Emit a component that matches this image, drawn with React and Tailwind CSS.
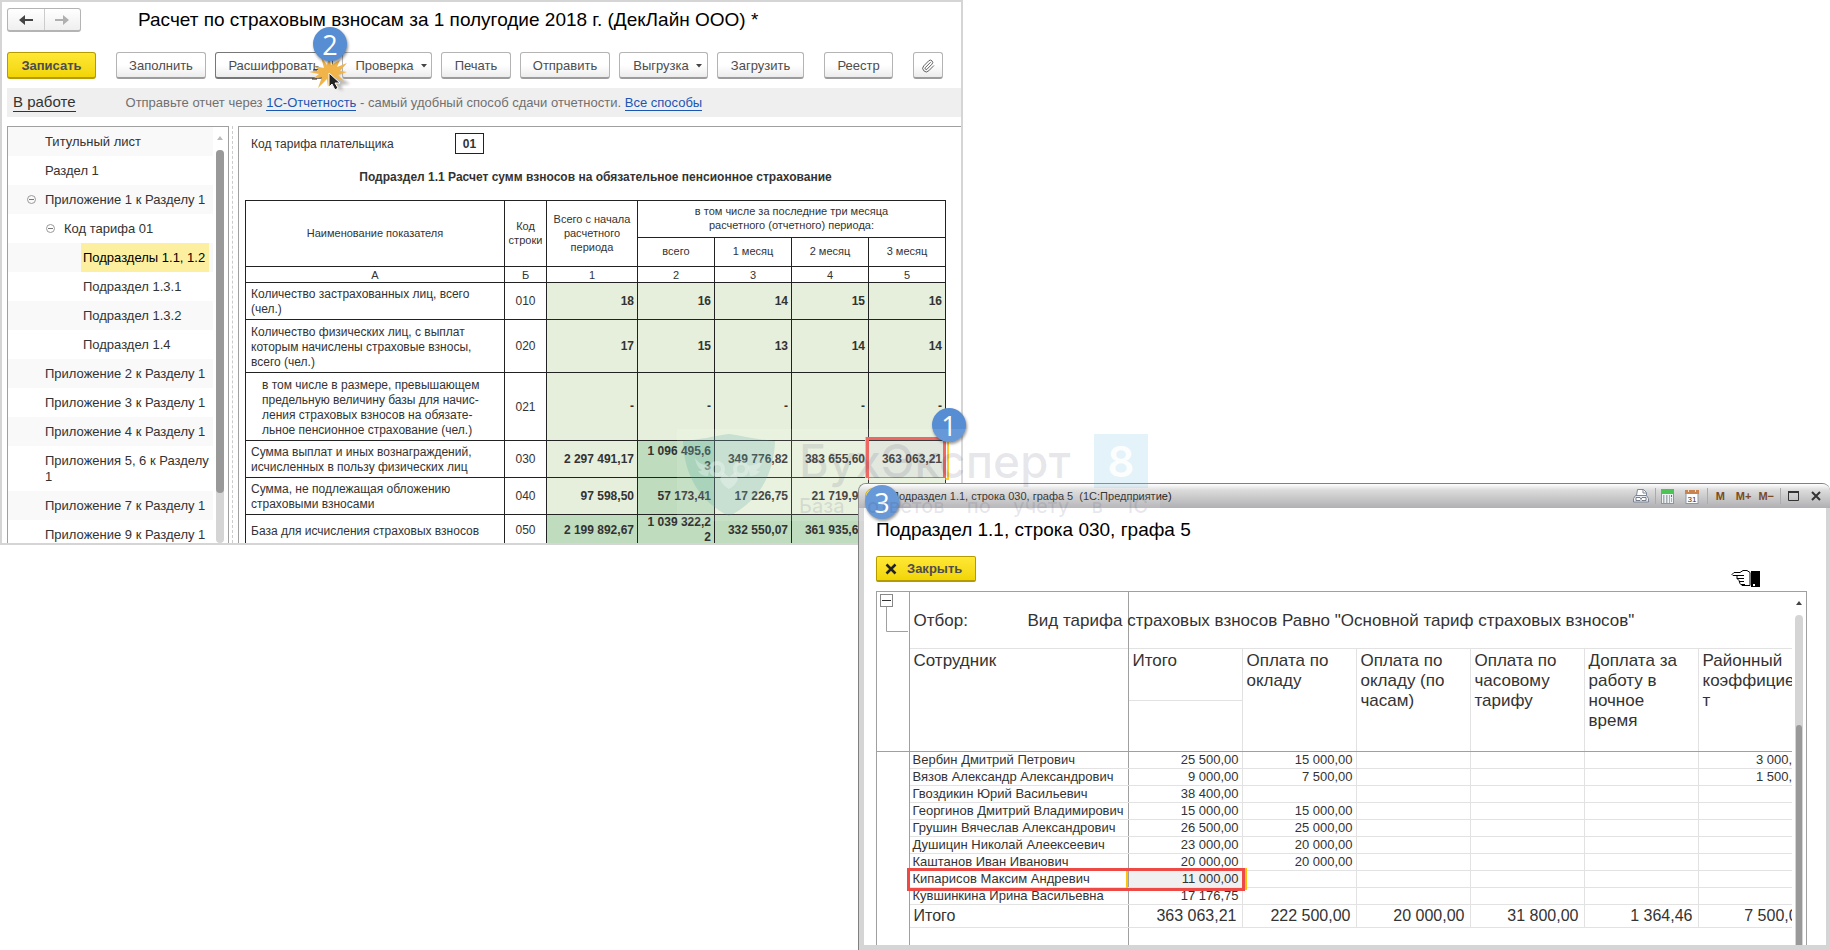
import React from 'react';
import { Paperclip } from 'lucide-react';

const treeItems = [
  { label: 'Титульный лист', level: 0 },
  { label: 'Раздел 1', level: 0 },
  { label: 'Приложение 1 к Разделу 1', level: 0, open: true },
  { label: 'Код тарифа 01', level: 1, open: true },
  { label: 'Подразделы 1.1, 1.2', level: 2, active: true },
  { label: 'Подраздел 1.3.1', level: 2 },
  { label: 'Подраздел 1.3.2', level: 2 },
  { label: 'Подраздел 1.4', level: 2 },
  { label: 'Приложение 2 к Разделу 1', level: 0 },
  { label: 'Приложение 3 к Разделу 1', level: 0 },
  { label: 'Приложение 4 к Разделу 1', level: 0 },
  { label: 'Приложения 5, 6 к Разделу 1', level: 0, tall: true },
  { label: 'Приложение 7 к Разделу 1', level: 0 },
  { label: 'Приложение 9 к Разделу 1', level: 0 },
];

const levelPadding = ['pl-[37px]', 'pl-[56px]', 'pl-[75px]'];

const reportRows = [
  { name: 'Количество застрахованных лиц, всего (чел.)', code: '010', height: 'h-[37px]', values: ['18', '16', '14', '15', '16'] },
  { name: 'Количество физических лиц, с выплат которым начислены страховые взносы, всего (чел.)', code: '020', height: 'h-[53px]', values: ['17', '15', '13', '14', '14'] },
  {
    name: 'в том числе в размере, превышающем\nпредельную величину базы для начис-\nления страховых взносов на обязате-\nльное пенсионное страхование (чел.)',
    code: '021', height: 'h-[68px]', indent: true, values: ['-', '-', '-', '-', '-'],
  },
  {
    name: 'Сумма выплат и иных вознаграждений, исчисленных в пользу физических лиц',
    code: '030', height: 'h-[37px]', dark: [1], selected: 4,
    values: ['2 297 491,17', '1 096 495,6\n3', '349 776,82', '383 655,60', '363 063,21'],
  },
  {
    name: 'Сумма, не подлежащая обложению страховыми взносами',
    code: '040', height: 'h-[37px]', dark: [1],
    values: ['97 598,50', '57 173,41', '17 226,75', '21 719,98', ''],
  },
  {
    name: 'База для исчисления страховых взносов',
    code: '050', height: 'h-[30px]', dark: [0, 1, 2, 3, 4],
    values: ['2 199 892,67', '1 039 322,2\n2', '332 550,07', '361 935,62', ''],
  },
];

const employees = [
  ['Вербин Дмитрий Петрович', '25 500,00', '15 000,00', '3 000,00'],
  ['Вязов Александр Александрович', '9 000,00', '7 500,00', '1 500,00'],
  ['Гвоздикин Юрий Васильевич', '38 400,00', '', ''],
  ['Георгинов Дмитрий Владимирович', '15 000,00', '15 000,00', ''],
  ['Грушин Вячеслав Александрович', '26 500,00', '25 000,00', ''],
  ['Душицин Николай Алеексеевич', '23 000,00', '20 000,00', ''],
  ['Каштанов Иван Иванович', '20 000,00', '20 000,00', ''],
  ['Кипарисов Максим Андревич', '11 000,00', '', ''],
  ['Кувшинкина Ирина Васильевна', '17 176,75', '', ''],
];

const payColumns = [
  'Оплата по\nокладу',
  'Оплата по\nокладу (по\nчасам)',
  'Оплата по\nчасовому\nтарифу',
  'Доплата за\nработу в\nночное\nвремя',
  'Районный\nкоэффициен\nт',
];

const totals = ['363 063,21', '222 500,00', '20 000,00', '31 800,00', '1 364,46', '7 500,00'];

function ToolButton({ children, className, dropdown, strong }) {
  return (
    <button
      className={`flex h-[27px] shrink-0 items-center justify-center rounded-[3px] border border-b-2 bg-linear-to-b from-white from-50% to-[#ececec] pt-px text-[13px] text-[#4d4d4d] ${dropdown ? 'pl-2' : ''} ${strong ? 'border-[#777]' : 'border-[#b4b4b4] border-b-[#9c9c9c]'} ${className}`}
    >
      {children}
      {dropdown && (
        <svg width="6" height="4" viewBox="0 0 6 4" className="ml-[7px]">
          <path d="M0 0h6L3 3.5z" fill="#444" />
        </svg>
      )}
    </button>
  );
}

function Callout({ number, className }) {
  return (
    <div
      className={`absolute z-30 flex h-[34px] w-[34px] items-center justify-center rounded-full bg-[#568dd3] font-['Open_Sans',sans-serif] text-[27px] leading-none text-white shadow-[1px_2px_3px_rgba(0,0,0,0.45)] ${className}`}
    >
      {number}
    </div>
  );
}

function ClickMark() {
  return (
    <svg width="46" height="38" viewBox="0 0 46 38" className="absolute left-[308px] top-[57px] z-20">
      <defs>
        <filter id="soft" x="-30%" y="-30%" width="160%" height="160%">
          <feGaussianBlur stdDeviation="1.5" />
        </filter>
      </defs>
      <path d="M24 8l12 8-6 3 12 8-9 1 2 6-14-8z" fill="#777" opacity="0.5" filter="url(#soft)" />
      <path
        d="M13 0l6 8 2-8 2 8 9-5-3 7 10-4-7 8 7 1-9 3 6 6-8-3 1 12-5-10-4 7-1-8-9 9 4-11-9 2 6-5-10-2 10-2-5-4 10 2z"
        fill="#f0b44a"
      />
      <path d="M21 16v14l3-3 3 6 3-2-3-5h5z" fill="#222" stroke="#fff" strokeWidth="1" />
      <path d="M5 13h4M4 22h5" stroke="#222" />
    </svg>
  );
}

function TreePanel() {
  return (
    <div className="flex w-[222px] shrink-0 overflow-hidden border border-b-0 border-[#a0a0a0] bg-white">
      <ul className="min-w-0 flex-1">
        {treeItems.map((item, i) => (
          <li
            key={item.label}
            className={`relative flex items-center text-[13px] text-[#333] ${item.tall ? 'h-[45px] leading-4' : 'h-[29px]'} ${i % 2 === 0 ? 'bg-[#f9f9f9]' : ''} ${levelPadding[item.level]}`}
          >
            {item.open && (
              <svg width="9" height="9" viewBox="0 0 9 9" className={`absolute top-[10px] ${item.level ? 'left-[38px]' : 'left-[19px]'}`}>
                <circle cx="4.5" cy="4.5" r="4" fill="none" stroke="#999" />
                <path d="M2 4.5h5" stroke="#777" />
              </svg>
            )}
            {item.active ? (
              <span className="-ml-[2px] flex h-full items-center bg-[#fcf0a0] pl-[2px] pr-1 text-black">{item.label}</span>
            ) : (
              <span>{item.label}</span>
            )}
          </li>
        ))}
      </ul>
      <div className="flex w-[15px] flex-col items-start bg-white pl-[3px]">
        <svg width="6" height="4" viewBox="0 0 6 4" className="ml-px mt-[9px]">
          <path d="M0 4h6L3 0z" fill="#bbb" />
        </svg>
        <div className="mt-[10px] w-2 flex-1 rounded-full bg-[#d5d5d5]">
          <div className="h-[343px] rounded-full bg-[#999]" />
        </div>
      </div>
    </div>
  );
}

function ReportTable() {
  const head = 'border border-[#222] pb-[2px] text-center text-[11px] leading-[14px] font-normal';
  return (
    <table className="w-[701px] table-fixed border-collapse text-[12px] text-[#333]">
      <colgroup>
        <col />
        <col className="w-[42px]" />
        <col className="w-[91px]" />
        <col className="w-[77px]" />
        <col className="w-[77px]" />
        <col className="w-[77px]" />
        <col className="w-[77px]" />
      </colgroup>
      <thead>
        <tr className="h-[37px]">
          <th rowSpan={2} className={head}>Наименование показателя</th>
          <th rowSpan={2} className={head}>Код строки</th>
          <th rowSpan={2} className={head}>Всего с начала расчетного периода</th>
          <th colSpan={4} className={head}>
            в том числе за последние три месяца<br />расчетного (отчетного) периода:
          </th>
        </tr>
        <tr className="h-[29px]">
          {['всего', '1 месяц', '2 месяц', '3 месяц'].map((t) => (
            <th key={t} className={head}>{t}</th>
          ))}
        </tr>
        <tr className="h-4">
          {['А', 'Б', '1', '2', '3', '4', '5'].map((t) => (
            <th key={t} className="border border-[#222] text-center text-[11px] leading-[14px] font-normal">{t}</th>
          ))}
        </tr>
      </thead>
      <tbody>
        {reportRows.map((row) => (
          <tr key={row.code} className={row.height}>
            <td className={`whitespace-pre-line border border-[#222] pr-1 pt-[2px] leading-[15px] ${row.indent ? 'pl-4' : 'pl-[5px]'}`}>{row.name}</td>
            <td className="border border-[#222] text-center">{row.code}</td>
            {row.values.map((value, i) => (
              <td
                key={i}
                className={`relative whitespace-pre border border-[#222] pr-[3px] text-right font-bold leading-[15px] ${row.dark?.includes(i) ? 'bg-[#bfdcbf]' : row.selected === i ? 'bg-[#e0e5da]' : 'bg-[#e6efdb]'}`}
              >
                {value}
                {row.selected === i && (
                  <>
                    <span className="absolute -bottom-[3px] -left-[4px] -right-[4px] -top-[4px] border-2 border-[#fdc40f]" />
                    <span className="absolute -bottom-[3px] -left-[3px] -right-[1px] -top-[4px] border-[3px] border-[#ec5650]" />
                  </>
                )}
              </td>
            ))}
          </tr>
        ))}
      </tbody>
    </table>
  );
}

function ReportWindow() {
  return (
    <section className="flex h-[545px] w-[963px] flex-col overflow-hidden border-2 border-[#d5d5d5] bg-white pl-[5px]">
      <header className="flex shrink-0 items-center pt-1">
        <div className="flex h-6 w-[74px] rounded-[3px] border border-b-2 border-[#b4b4b4] bg-linear-to-b from-white to-[#efefef]">
          <button aria-label="Назад" className="flex flex-1 items-center justify-center border-r border-[#ccc]">
            <svg width="14" height="10" viewBox="0 0 14 10"><path d="M14 4H6V0L0 5l6 5V6h8z" fill="#444" /></svg>
          </button>
          <button aria-label="Вперед" className="flex flex-1 items-center justify-center">
            <svg width="14" height="10" viewBox="0 0 14 10"><path d="M0 4h8V0l6 5-6 5V6H0z" fill="#b0b0b0" /></svg>
          </button>
        </div>
        <h1 className="ml-[57px] text-[19px] leading-7 text-black">
          Расчет по страховым взносам за 1 полугодие 2018 г. (ДекЛайн ООО) *
        </h1>
      </header>

      <div className="mt-[18px] flex shrink-0 gap-[9px]">
        <button className="mr-[11px] h-[27px] w-[89px] rounded-[3px] border border-b-2 border-[#b39b00] bg-linear-to-b from-[#ffe833] to-[#f2d500] pt-px text-[13px] font-bold text-[#4d4d4d]">
          Записать
        </button>
        <ToolButton className="w-[90px]">Заполнить</ToolButton>
        <ToolButton className="w-[118px]" strong>Расшифровать</ToolButton>
        <ToolButton className="w-[90px]" dropdown>Проверка</ToolButton>
        <ToolButton className="w-[70px]">Печать</ToolButton>
        <ToolButton className="w-[90px]">Отправить</ToolButton>
        <ToolButton className="w-[89px]" dropdown>Выгрузка</ToolButton>
        <ToolButton className="w-[87px]">Загрузить</ToolButton>
        <ToolButton className="ml-[11px] w-[69px]">Реестр</ToolButton>
        <ToolButton className="ml-[11px] w-[30px]">
          <Paperclip size={14} strokeWidth={1.5} aria-label="Файлы" />
        </ToolButton>
      </div>

      <div className="mt-[9px] flex h-[29px] shrink-0 items-center bg-[#efefef] pl-[6px]">
        <a href="#status" className="text-[15px] leading-[18px] text-[#333] border-b border-[#333]">В работе</a>
        <p className="ml-[50px] text-[13px] leading-4 text-[#707070]">
          Отправьте отчет через{' '}
          <a href="#reporting" className="border-b border-[#1a56b4] text-[#1a56b4]">1С-Отчетность</a>
          {' '}- самый удобный способ сдачи отчетности.{' '}
          <a href="#ways" className="border-b border-[#1a56b4] text-[#1a56b4]">Все способы</a>
        </p>
      </div>

      <div className="mt-[9px] flex min-h-0 flex-1">
        <TreePanel />
        <div className="ml-[3px] w-[6px] shrink-0 border-l border-dashed border-[#ccc]" />
        <div className="min-w-0 flex-1 overflow-hidden border-l border-t border-[#a0a0a0] pl-[6px]">
          <div className="mt-[6px] flex items-center pl-[6px] text-[12px] text-[#333]">
            <span className="w-[204px]">Код тарифа плательщика</span>
            <span className="flex h-[21px] w-[29px] items-center justify-center border border-[#222] font-bold">01</span>
          </div>
          <h2 className="mb-[15px] mt-[15px] w-[701px] text-center text-[12px] font-bold leading-4 text-[#333]">
            Подраздел 1.1 Расчет сумм взносов на обязательное пенсионное страхование
          </h2>
          <ReportTable />
        </div>
      </div>
    </section>
  );
}

function TitleBarIcons() {
  return (
    <div className="flex h-full items-center pr-[9px]">
      <button aria-label="Печать">
        <svg width="16" height="14" viewBox="0 0 16 14">
          <path d="M3.5 6.500L4.500 .5h6l3 3v3.500" fill="#fff" stroke="#7b8796" />
          <path d="M10 .5V4h3.500" fill="none" stroke="#7b8796" />
          <path d="M2.500 6.500h11l2 3v3.500H.5V9.500z" fill="#e8ecf2" stroke="#7b8796" />
          <path d="M3 8.500h4l1 1.500 1-1.500h4v3H9l-1-1-1 1H3z" fill="#fff" stroke="#56616f" strokeWidth=".8" />
        </svg>
      </button>
      <span className="ml-[6px] mr-[5px] h-4 w-px bg-[#aaaaaf]" />
      <button aria-label="Калькулятор">
        <svg width="13" height="15" viewBox="0 0 13 15">
          <rect x=".5" y=".5" width="12" height="14" fill="#eef2f5" stroke="#8a97a3" />
          <rect x="0" y="0" width="13" height="5" fill="#4cc354" />
          <path d="M2 7h1.500M5 7h1.500M8 7h1M2 9h1.500M5 9h1.500M8 9h1M2 11h1.500M5 11h1.500M8 11h1M2 13h1.500M5 13h1.500M8 13h1M10 10h1M10 12h1" stroke="#5d6772" />
          <path d="M10 6h1v2h-1z" fill="#e33" />
        </svg>
      </button>
      <button aria-label="Календарь" className="ml-[11px]">
        <svg width="14" height="15" viewBox="0 0 14 15">
          <rect x="1" y="3" width="12" height="11.500" fill="#fff" stroke="#8a97a3" />
          <rect x="0" y="1" width="14" height="4" fill="#c9834f" />
          <path d="M3.500 0v3M10.500 0v3" stroke="#f3dcc8" />
          <text x="7" y="12.500" textAnchor="middle" fontSize="8" fontFamily="Liberation Sans" fill="#333">31</text>
        </svg>
      </button>
      <span className="ml-2 mr-[8px] h-4 w-px bg-[#aaaaaf]" />
      <button className="text-[11px] font-bold text-[#7a4a24]">M</button>
      <button className="ml-[11px] text-[11px] font-bold text-[#7a4a24]">M+</button>
      <button className="ml-[7px] text-[11px] font-bold text-[#7a4a24]">M−</button>
      <span className="ml-[6px] mr-[7px] h-4 w-px bg-[#aaaaaf]" />
      <button aria-label="Развернуть">
        <svg width="11" height="10" viewBox="0 0 11 10">
          <path d="M.5 .5h10v9H.5z" fill="none" stroke="#333" />
          <path d="M0 1h11" stroke="#333" strokeWidth="2" />
        </svg>
      </button>
      <button aria-label="Закрыть окно" className="ml-[12px]">
        <svg width="10" height="10" viewBox="0 0 10 10"><path d="M1 1l8 8M9 1L1 9" stroke="#333" strokeWidth="2" /></svg>
      </button>
    </div>
  );
}

function DetailsTable() {
  const light = 'border border-[#e2e2e2]';
  const gutter = 'border-r border-[#a0a0a0]';
  const frozen = 'border-r border-r-[#a0a0a0] border-y border-y-[#e2e2e2]';
  return (
    <table className="h-full w-[935px] table-fixed border-collapse text-[13px] text-[#333]">
      <colgroup>
        <col className="w-[32px]" />
        <col className="w-[219px]" />
        {totals.map((t) => (
          <col key={t} className="w-[114px]" />
        ))}
      </colgroup>
      <thead className="text-[17px] leading-5">
        <tr className="h-[56px]">
          <td rowSpan={3} className="border-b border-r border-[#a0a0a0] align-top">
            <svg width="31" height="42" viewBox="0 0 31 42" className="block">
              <path d="M9.500 15v24.500H31" fill="none" stroke="#a0a0a0" />
              <rect x="3.500" y="2.500" width="12" height="12" fill="#fff" stroke="#888" />
              <path d="M5 8.500h9" stroke="#333" />
            </svg>
          </td>
          <td className="border-r border-[#a0a0a0] pl-1 pt-[2px]">
            <div className="flex whitespace-nowrap">
              <span className="w-[114px] shrink-0">Отбор:</span>
              <span>Вид тарифа страховых взносов Равно "Основной тариф страховых взносов"</span>
            </div>
          </td>
          <td colSpan={6} />
        </tr>
        <tr className="h-[52px]">
          <th rowSpan={2} className="border-b border-r border-t border-[#a0a0a0] border-t-[#e2e2e2] pl-1 pt-[2px] text-left align-top font-normal">Сотрудник</th>
          <th className="border border-l-[#a0a0a0] border-[#e2e2e2] pl-1 pt-[2px] text-left align-top font-normal">Итого</th>
          {payColumns.map((name) => (
            <th key={name} rowSpan={2} className="whitespace-pre border border-[#e2e2e2] border-b-[#a0a0a0] pl-1 pt-[2px] text-left align-top font-normal">
              {name}
            </th>
          ))}
        </tr>
        <tr className="h-[51px]">
          <td className="border-b border-[#a0a0a0]" />
        </tr>
      </thead>
      <tbody>
        {employees.map(([name, total, salary, district]) => {
          const marked = name.startsWith('Кипарисов');
          return (
            <tr key={name} className="h-[17px] leading-4">
              <td className={gutter} />
              <td className={`relative whitespace-nowrap pl-[3px] ${frozen}`}>
                {name}
                {marked && (
                  <>
                    <span className="absolute -top-[3px] left-[216px] z-10 h-[22px] w-[121px] border-2 border-[#fdc40f]" />
                    <span className="absolute -left-[3px] -top-[3px] z-10 h-[23px] w-[338px] border-[3px] border-[#ee4a45]" />
                  </>
                )}
              </td>
              <td className={`pr-[3px] text-right ${light} border-l-[#a0a0a0] ${marked ? 'bg-[#f0f0f0]' : ''}`}>{total}</td>
              <td className={`pr-[3px] text-right ${light}`}>{salary}</td>
              <td className={light} />
              <td className={light} />
              <td className={light} />
              <td className={`pr-[5px] text-right ${light}`}>{district}</td>
            </tr>
          );
        })}
        <tr className="h-[23px] text-[16px] leading-5">
          <td className={gutter} />
          <td className={`pl-1 ${frozen}`}>Итого</td>
          {totals.map((t) => (
            <td key={t} className={`pr-[5px] text-right ${light}`}>{t}</td>
          ))}
        </tr>
        <tr>
          <td className={gutter} />
          <td className={gutter} />
          <td colSpan={6} />
        </tr>
      </tbody>
    </table>
  );
}

function DetailsWindow() {
  return (
    <section className="absolute bottom-0 left-[858px] right-0 top-[483px] flex flex-col overflow-hidden rounded-t-lg border-l border-t border-[#808080] bg-[#d5d5d5]">
      <div className="flex h-6 shrink-0 items-center justify-between bg-linear-to-b from-white via-[#dcdcdc] via-25% to-[#b0b0b4]">
        <div className="flex items-center pl-[6px] text-[11px] text-[#222]">
          <span className="mr-[10px] h-4 w-4 rounded-full border border-[#c9a800] bg-[#ffe96b]" />
          <span className="whitespace-pre">Подраздел 1.1, строка 030, графа 5  (1С:Предприятие)</span>
        </div>
        <TitleBarIcons />
      </div>
      <div className="mb-[5px] ml-[5px] mr-1 flex min-h-0 flex-1 flex-col bg-white pl-3 pr-[19px]">
        <h2 className="mt-[10px] text-[19px] leading-6 text-black">Подраздел 1.1, строка 030, графа 5</h2>
        <div className="relative mb-[9px] mt-[14px]">
          <button className="flex h-[26px] w-[100px] items-center rounded-[2px] border border-b-2 border-[#b39b00] bg-linear-to-b from-[#ffe833] to-[#f2d500] pl-2 text-[13px] font-bold text-[#4d4d4d]">
            <svg width="12" height="12" viewBox="0 0 12 12" className="mr-[10px]">
              <path d="M1.500 1.500l9 9M10.500 1.500l-9 9" stroke="#222" strokeWidth="2.500" />
            </svg>
            Закрыть
          </button>
          <svg width="30" height="19" viewBox="0 0 30 19" className="absolute right-[46px] top-[13px]">
            <path d="M1 5.500L3 3.500h6L12 1.500h4l3 2v13h-8l-2-2-1-3-2-2V6.500H2z" fill="#fff" stroke="#000" />
            <path d="M2 6.500h11M6 9.500h7M8 12.500h5M10 15.500h4" stroke="#000" />
            <rect x="20" y="2" width="9" height="16" />
            <rect x="22" y="15" width="2" height="2" fill="#fff" />
          </svg>
        </div>
        <div className="flex min-h-0 flex-1 overflow-hidden border border-b-0 border-[#a0a0a0]">
          <div className="min-w-0 flex-1 overflow-hidden">
            <DetailsTable />
          </div>
          <div className="ml-[3px] mr-[3px] flex w-2 shrink-0 flex-col items-center">
            <svg width="6" height="4" viewBox="0 0 6 4" className="mt-[9px] shrink-0">
              <path d="M0 4h6L3 0z" fill="#444" />
            </svg>
            <div className="mt-[10px] flex w-2 flex-1 flex-col rounded-t-full bg-[#d5d5d5] px-px">
              <div className="mt-[110px] flex-1 rounded-t-full bg-[#999]" />
            </div>
          </div>
        </div>
      </div>
    </section>
  );
}

function Watermark() {
  return (
    <div className="pointer-events-none absolute left-[677px] top-[429px] z-40 flex h-[92px] items-start bg-white/10 pl-[6px] pr-3 pt-[5px] font-[Inter,sans-serif]">
      <svg width="92" height="82" viewBox="0 0 92 82">
        <path d="M0 7C16 6 32 2 46 0c14 2 30 6 46 7C91 38 78 66 46 82 14 66 1 38 0 7z" fill="#4ca3a0" opacity="0.22" />
        <g opacity="0.3" fill="none" stroke="#fff" strokeWidth="4">
          <circle cx="34" cy="35" r="6" />
          <circle cx="58" cy="35" r="6" />
        </g>
        <path d="M40 38l6 5 6-5 3 7c-2 5-5 8-9 10-4-2-7-5-9-10z" fill="#fff" opacity="0.3" />
        <path d="M12 24c4 6 9 7 15 8l-2 10c-5 0-8-2-10-5 2 0 3 0 4-1-4-2-6-6-7-12zM80 24c-4 6-9 7-15 8l2 10c5 0 8-2 10-5-2 0-3 0-4-1 4-2 6-6 7-12z" fill="#fff" opacity="0.3" />
      </svg>
      <div className="ml-6 w-[349px]">
        <div className="flex h-[54px] items-center justify-between text-[#3c3c64]/12">
          <span className="text-[46px] font-medium leading-none">БухЭксперт</span>
          <span className="flex h-[54px] w-[54px] items-center justify-center bg-[#4aa6d9]/15 text-[42px] font-semibold text-white/90">8</span>
        </div>
        <div className="mt-[6px] flex justify-between text-[20px] font-medium leading-6 text-[#3c3c64]/12">
          <span>База</span>
          <span>ответов</span>
          <span>по</span>
          <span>учету</span>
          <span>в</span>
          <span>1С</span>
        </div>
      </div>
    </div>
  );
}

function App() {
  return (
    <main className="relative min-h-screen overflow-hidden bg-white font-['Liberation_Sans',Arial,sans-serif]">
      <ReportWindow />
      <DetailsWindow />
      <ClickMark />
      <Callout number="2" className="left-[313px] top-[27px]" />
      <Callout number="1" className="left-[932px] top-[408px]" />
      <Callout number="3" className="left-[865px] top-[485px]" />
      <Watermark />
    </main>
  );
}

export default App;
